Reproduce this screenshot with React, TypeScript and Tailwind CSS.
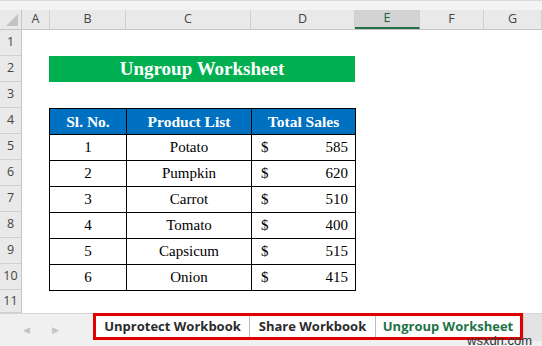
import React from 'react';

const cols = [
  { name: 'A', w: 'w-[28px]' },
  { name: 'B', w: 'w-[76px]' },
  { name: 'C', w: 'w-[125px]' },
  { name: 'D', w: 'w-[104px]' },
  { name: 'E', w: 'w-[65px]' },
  { name: 'F', w: 'w-[64px]' },
  { name: 'G', w: 'w-[58px]' },
];

const rows = [
  { no: 1, product: 'Potato', sales: 585 },
  { no: 2, product: 'Pumpkin', sales: 620 },
  { no: 3, product: 'Carrot', sales: 510 },
  { no: 4, product: 'Tomato', sales: 400 },
  { no: 5, product: 'Capsicum', sales: 515 },
  { no: 6, product: 'Onion', sales: 415 },
];

const App: React.FC = () => {
  return (
    <div className="relative w-[542px] h-[346px] overflow-hidden bg-white [font-family:'Open_Sans',sans-serif] text-[#444]">
      {/* strip above the column letters */}
      <div className="h-[10px] bg-[#f3f3f3] border-t border-[#dadada]" />

      {/* column header */}
      <div className="flex h-[20px] bg-[#e9e9e9] border-b border-[#c6c6c6]">
        <div className="relative w-[22px] border-r border-[#c6c6c6]">
          <div className="absolute right-[3px] bottom-[3px] w-0 h-0 border-l-[12px] border-l-transparent border-b-[12px] border-b-[#c3c3c3]" />
        </div>
        {cols.map((c) => (
          <div
            key={c.name}
            className={`${c.w} flex items-center justify-center text-[12.5px] border-r border-[#d0d0d0] ${
              c.name === 'E' ? 'bg-[#d3d3d3] text-[#1e5e3a] border-b-2 border-b-[#217346]' : ''
            }`}
          >
            {c.name}
          </div>
        ))}
      </div>

      {/* body */}
      <div className="flex h-[283px]">
        <div className="w-[22px] flex flex-col bg-[#e9e9e9] border-r border-[#c6c6c6]">
          {Array.from({ length: 11 }, (_, i) => (
            <div
              key={i}
              className={`${i === 10 ? 'h-[23px]' : 'h-[26px]'} flex items-center justify-center text-[12.5px] border-b border-[#d0d0d0]`}
            >
              {i + 1}
            </div>
          ))}
        </div>

        <div className="flex-1 pl-[27px] pt-[26px] [font-family:'Liberation_Serif',serif] text-black">
          <div className="w-[306px] h-[26px] bg-[#00b050] flex items-center justify-center text-white font-bold text-[19px]">
            Ungroup Worksheet
          </div>

          <table className="mt-[26px] border-collapse text-[15px]">
            <thead>
              <tr className="h-[26px] bg-[#0070c0] text-white text-[15.5px]">
                <th className="w-[77px] border border-black font-bold">Sl. No.</th>
                <th className="w-[125px] border border-black font-bold">Product List</th>
                <th className="w-[104px] border border-black font-bold">Total Sales</th>
              </tr>
            </thead>
            <tbody>
              {rows.map((r) => (
                <tr key={r.no} className="h-[26px]">
                  <td className="border border-black text-center p-0">{r.no}</td>
                  <td className="border border-black text-center p-0">{r.product}</td>
                  <td className="border border-black p-0">
                    <div className="flex justify-between pl-[9px] pr-[7px]">
                      <span>$</span>
                      <span>{r.sales}</span>
                    </div>
                  </td>
                </tr>
              ))}
            </tbody>
          </table>
        </div>
      </div>

      {/* sheet tabs */}
      <div className="flex h-[33px] bg-[#f0f0f0] border-t border-[#d4d4d4]">
        <div className="w-[93px] flex items-center pl-[23px] gap-[22px] text-[#c4c4c4] text-[9px]">
          <span>◀</span>
          <span>▶</span>
        </div>
        <div className="flex h-[27px] -mt-px border-[3px] border-[#e00000] bg-white text-[13px] font-bold">
          <div className="w-[154px] flex items-center justify-center text-[#2b2b2b] border-r border-[#bcbcbc]">
            Unprotect Workbook
          </div>
          <div className="w-[126px] flex items-center justify-center text-[#2b2b2b] border-r border-[#bcbcbc]">
            Share Workbook
          </div>
          <div className="w-[144px] flex items-center justify-center text-[#217346]">
            Ungroup Worksheet
          </div>
        </div>
        <div className="flex-1 h-[27px] bg-[#e3e3e3] border-l border-[#cfcfcf]" />
      </div>

      <div className="absolute left-[467px] top-[334px] text-[13px] leading-[14px] text-[#333] [font-family:'Liberation_Sans',sans-serif]">
        wsxdn.com
      </div>
    </div>
  );
};

export default App;
